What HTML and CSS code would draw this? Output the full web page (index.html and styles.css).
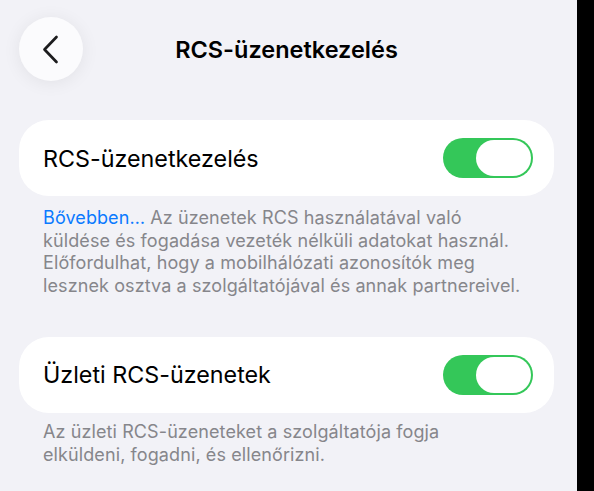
FILE: index.html
```html
<!DOCTYPE html>
<html lang="hu">
<head>
<meta charset="utf-8">
<title>RCS-üzenetkezelés</title>
<link rel="stylesheet" href="styles.css">
</head>
<body>
<div class="screen">
  <main class="page">
    <header class="nav">
      <button class="back" aria-label="Vissza">
        <svg width="17" height="29" viewBox="0 0 17 29" fill="none">
          <path d="M14.5 2 L2.5 14.5 L14.5 27" stroke="#1c1c1e" stroke-width="2.7" stroke-linecap="round" stroke-linejoin="round"/>
        </svg>
      </button>
      <h1 class="title">RCS-üzenetkezelés</h1>
      <span class="spacer"></span>
    </header>

    <section class="group">
      <div class="card">
        <span class="label">RCS-üzenetkezelés</span>
        <span class="toggle on"><span class="knob"></span></span>
      </div>
      <p class="footer"><a class="link" href="#">Bővebben…</a> Az üzenetek RCS használatával való<br>küldése és fogadása vezeték nélküli adatokat használ.<br>Előfordulhat, hogy a mobilhálózati azonosítók meg<br>lesznek osztva a szolgáltatójával és annak partnereivel.</p>
    </section>

    <section class="group">
      <div class="card">
        <span class="label">Üzleti RCS-üzenetek</span>
        <span class="toggle on"><span class="knob"></span></span>
      </div>
      <p class="footer second">Az üzleti RCS-üzeneteket a szolgáltatója fogja<br>elküldeni, fogadni, és ellenőrizni.</p>
    </section>
  </main>
  <div class="edge"></div>
</div>
</body>
</html>
```

FILE: styles.css
```css
* { box-sizing: border-box; }

html, body {
  margin: 0;
  padding: 0;
  height: 100%;
}

body {
  font-family: Inter, "Noto Sans", "Liberation Sans", sans-serif;
  background: #000;
  color: #000;
  -webkit-font-smoothing: antialiased;
}

.screen {
  display: flex;
  height: 491px;
  overflow: hidden;
}

.page {
  width: 577px;
  flex: none;
  background: #f2f2f7;
  padding: 17px 0 0 19px;
}

.edge {
  flex: 1;
  background: #000;
}

.nav {
  display: grid;
  grid-template-columns: 64px 1fr 64px;
  align-items: center;
  width: 535px;
  height: 64px;
}

.back {
  width: 64px;
  height: 64px;
  border-radius: 50%;
  border: none;
  padding: 0 2px 0 0;
  background: #fbfbfd;
  box-shadow: 0 2px 18px rgba(0, 0, 0, 0.07);
  display: flex;
  align-items: center;
  justify-content: center;
}

.title {
  margin: 0;
  text-align: center;
  font-size: 23.5px;
  font-weight: 600;
  color: #000;
}

.group {
  margin-top: 39px;
}

.card {
  width: 535px;
  height: 76px;
  background: #fff;
  border-radius: 30px;
  display: flex;
  align-items: center;
  justify-content: space-between;
  padding: 0 21px 0 24px;
}

.label {
  font-size: 23.3px;
  font-weight: 400;
  color: #000;
}

.toggle {
  position: relative;
  width: 90px;
  height: 40px;
  border-radius: 20px;
  background: #34c759;
  flex: none;
}

.knob {
  position: absolute;
  top: 2px;
  right: 2px;
  width: 55px;
  height: 36px;
  border-radius: 18px;
  background: #fff;
}

.footer {
  margin: 11px 0 0;
  padding-left: 24px;
  font-size: 18px;
  line-height: 22.7px;
  letter-spacing: 0.1px;
  color: #86868b;
  white-space: nowrap;
}

.footer.second {
  margin-top: 8px;
}

.link {
  color: #0a7aff;
  text-decoration: none;
}
```
